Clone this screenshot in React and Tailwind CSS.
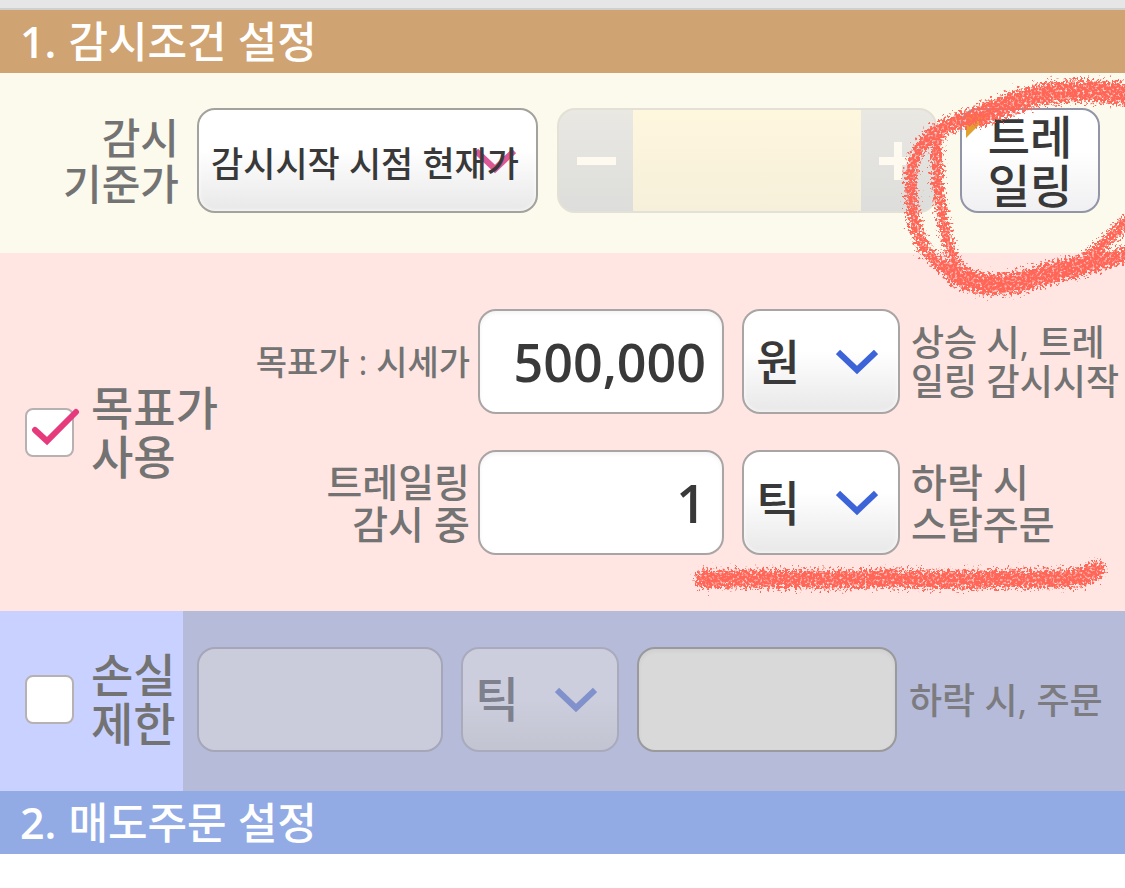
import React, { useState } from 'react';
import clsx from 'clsx';

const Chevron = ({ className }) => (
    <svg viewBox="0 0 42 28" className={className} fill="none" stroke="currentColor" strokeWidth="6" aria-hidden="true">
        <path d="M2 4 L21 22 L40 4" />
    </svg>
);

const SectionTitle = ({ number, children, className }) => (
    <h2 className={clsx('flex h-[63px] items-center gap-3 px-5 text-[43px] leading-[60px] font-medium text-white', className)}>
        <span className="font-semibold">{number}.</span>
        <span>{children}</span>
    </h2>
);

const UnitSelect = ({ label, value, options, disabled }) => (
    <div
        className={clsx(
            'relative h-[105px] w-[158px] shrink-0 rounded-[18px] border-2',
            disabled
                ? 'border-[#a9abbd] bg-linear-to-b from-[#cdcedd] from-50% to-[#c3c4d2] text-[#7e808d]'
                : 'border-[#aaa5a5] bg-linear-to-b from-white from-40% to-[#e8e8e8] text-[#393939] inset-shadow-[0_0_4px_#ffffff]'
        )}
    >
        <Chevron className={clsx('absolute top-[37px] right-5 w-[42px]', disabled ? 'text-[#8091cc]' : 'text-[#3c64d8]')} />
        <select
            aria-label={label}
            defaultValue={value}
            disabled={disabled}
            className="relative h-full w-full appearance-none bg-transparent pl-3 text-[48px] font-medium opacity-100"
        >
            {options.map((o) => (
                <option key={o}>{o}</option>
            ))}
        </select>
    </div>
);

const NumberField = ({ className, ...props }) => (
    <input
        type="text"
        inputMode="numeric"
        className={clsx('h-[105px] shrink-0 rounded-[18px] border-2 px-4 text-right text-[52px] font-semibold', className)}
        {...props}
    />
);

const ToggleLabel = ({ id, checked, onChange, children }) => (
    <div className="flex items-center gap-[17px] pl-[25px]">
        <div className="relative size-[49px] shrink-0">
            <input
                id={id}
                type="checkbox"
                checked={checked}
                onChange={onChange}
                className="block size-full appearance-none rounded-lg border-2 border-[#b8b1b1] bg-white"
            />
            {checked && (
                <svg viewBox="0 0 56 49" className="pointer-events-none absolute top-0 left-0 h-[49px] w-14" fill="none" aria-hidden="true">
                    <path d="M10 22 L22 33 L51 4" stroke="#e63a7c" strokeWidth="6" strokeLinecap="round" />
                </svg>
            )}
        </div>
        <label htmlFor={id} className="text-[46px] leading-[49px] font-medium whitespace-nowrap text-[#737373]">
            {children}
        </label>
    </div>
);

const CrayonFilter = ({ id }) => (
    <filter id={id} x="-10%" y="-200%" width="120%" height="500%">
        <feTurbulence type="fractalNoise" baseFrequency="0.4" numOctaves="2" seed="7" result="noise" />
        <feDisplacementMap in="SourceGraphic" in2="noise" scale="20" xChannelSelector="R" yChannelSelector="G" result="rough" />
        <feColorMatrix in="noise" type="matrix" values="0 0 0 0 0  0 0 0 0 0  0 0 0 0 0  0 0 3 0 -0.45" result="grain" />
        <feComposite in="rough" in2="grain" operator="in" />
        <feGaussianBlur stdDeviation="0.6" />
    </filter>
);

const CircleMark = () => (
    <svg
        viewBox="900 73 225 237"
        className="pointer-events-none absolute top-0 right-0 z-10 h-[237px] w-[225px]"
        fill="none"
        stroke="#ff6659"
        strokeLinecap="round"
        strokeLinejoin="round"
        aria-hidden="true"
    >
        <CrayonFilter id="crayon-circle" />
        <g filter="url(#crayon-circle)">
            <path strokeWidth="22" d="M1135 97 C1110 90 1070 89 1040 95 C1015 100 1000 108 982 115" />
            <path strokeWidth="16" d="M990 112 C965 119 945 124 930 137" />
            <path strokeWidth="12" d="M935 132 C915 147 910 165 911 190 C912 220 917 243 932 257 C942 268 950 272 960 277" />
            <path strokeWidth="11" d="M938 134 C934 160 938 190 942 214 C946 238 950 254 960 272" />
            <path strokeWidth="21" d="M955 274 C975 286 1005 288 1030 279 C1045 274 1060 271 1078 266" />
            <path strokeWidth="15" d="M1060 274 C1090 266 1105 262 1135 251" />
            <path strokeWidth="12" d="M1078 264 C1098 252 1110 238 1135 213" />
        </g>
    </svg>
);

const UnderlineMark = () => (
    <svg
        viewBox="0 0 420 40"
        className="pointer-events-none absolute right-[15px] bottom-[14px] z-10 h-10 w-[420px]"
        fill="none"
        stroke="#ff6659"
        strokeLinecap="round"
        strokeLinejoin="round"
        aria-hidden="true"
    >
        <CrayonFilter id="crayon-line" />
        <path
            filter="url(#crayon-line)"
            strokeWidth="18"
            d="M14 22 C80 20 110 24 170 22 C220 20 250 25 300 22 C340 21 370 23 392 20 L406 13"
        />
    </svg>
);

const App = () => {
    const [useTarget, setUseTarget] = useState(true);
    const [useStopLoss, setUseStopLoss] = useState(false);

    return (
        <main className="min-h-screen overflow-x-hidden bg-white font-['Open_Sans','Noto_Sans_CJK_KR',sans-serif]">
            <div className="h-[10px] border-b-2 border-[#cfcfcf] bg-[#e6e6e6]" />
            <SectionTitle number="1" className="bg-[#cfa372]">감시조건 설정</SectionTitle>

            <div className="relative">
                <section className="flex h-[180px] bg-[#fcfaec] pt-[35px] pr-[25px]">
                    <label
                        htmlFor="base-price"
                        className="flex h-[105px] w-[179px] shrink-0 items-center justify-end text-right text-[42px] leading-[46px] font-medium text-[#737373]"
                    >
                        감시<br />기준가
                    </label>
                    <div className="relative ml-[18px] h-[105px] w-[341px] shrink-0 rounded-[18px] border-2 border-[#a3a29c] bg-linear-to-b from-white from-40% to-[#e8e8e8] inset-shadow-[0_0_4px_#ffffff]">
                        <Chevron className="absolute top-[37px] right-5 w-[42px] text-[#dc5796]" />
                        <select
                            id="base-price"
                            className="relative h-full w-full appearance-none bg-transparent pt-2 pl-3 text-[35px] font-medium text-[#393939]"
                        >
                            <option>감시시작 시점 현재가</option>
                        </select>
                    </div>
                    <div className="ml-[19px] flex h-[105px] min-w-0 flex-1 overflow-hidden rounded-[18px] border-2 border-[#e3e0d5] bg-linear-to-b from-[#e9e8e3] to-[#dddddb]">
                        <button type="button" aria-label="감소" disabled className="flex w-[74px] items-center justify-center">
                            <span className="h-2 w-[39px] bg-[#fffaf0]" />
                        </button>
                        <input
                            type="text"
                            aria-label="기준가"
                            disabled
                            className="min-w-0 flex-1 bg-linear-to-b from-[#fff6de] to-[#f6f0da]"
                        />
                        <button type="button" aria-label="증가" disabled className="flex w-[74px] items-center justify-center">
                            <svg viewBox="0 0 38 38" className="w-[38px]" stroke="#fffaf0" strokeWidth="8" aria-hidden="true">
                                <path d="M19 0 V38 M0 19 H38" />
                            </svg>
                        </button>
                    </div>
                    <button
                        type="button"
                        className="relative ml-[23px] h-[105px] w-[140px] shrink-0 rounded-[18px] border-2 border-[#9294a8] bg-linear-to-b from-white from-40% to-[#f0f0f2] text-[46px] leading-[49px] font-medium text-[#393939]"
                    >
                        <svg viewBox="0 0 24 24" className="absolute top-1 left-1 w-6" aria-hidden="true">
                            <path d="M0 0 H24 L0 24 Z" fill="#e2a02f" />
                        </svg>
                        <span className="relative">트레<br />일링</span>
                    </button>
                </section>

                <section className="relative flex h-[358px] items-center bg-[#ffe6e2]">
                    <ToggleLabel id="use-target" checked={useTarget} onChange={(e) => setUseTarget(e.target.checked)}>
                        목표가<br />사용
                    </ToggleLabel>
                    <div className="flex min-w-0 flex-1 flex-col gap-9">
                        <div className="flex items-center justify-end">
                            <label htmlFor="target-price" className="text-[34px] leading-10 font-medium whitespace-nowrap text-[#737373]">
                                목표가 : 시세가
                            </label>
                            <NumberField id="target-price" defaultValue="500,000" className="mr-[18px] ml-2 w-[246px] border-[#aaa5a5] bg-white text-[#393939] inset-shadow-sm" />
                            <UnitSelect label="목표가 단위" value="원" options={['원', '틱', '%']} />
                            <p className="ml-[11px] w-[214px] shrink-0 text-[36px] leading-[39px] font-medium whitespace-nowrap text-[#737373]">
                                상승 시, 트레<br />일링 감시시작
                            </p>
                        </div>
                        <div className="flex items-center justify-end">
                            <label htmlFor="trailing" className="text-right text-[39px] leading-[42px] font-medium whitespace-nowrap text-[#737373]">
                                트레일링<br />감시 중
                            </label>
                            <NumberField id="trailing" defaultValue="1" className="mr-[18px] ml-2 w-[246px] border-[#aaa5a5] bg-white text-[#393939] inset-shadow-sm" />
                            <UnitSelect label="트레일링 단위" value="틱" options={['원', '틱', '%']} />
                            <p className="ml-[11px] w-[214px] shrink-0 text-[39px] leading-[42px] font-medium whitespace-nowrap text-[#737373]">
                                하락 시<br />스탑주문
                            </p>
                        </div>
                    </div>
                    <UnderlineMark />
                </section>
                <CircleMark />
            </div>

            <section className="flex h-[180px] bg-[#b5bbd9]">
                <div className="flex w-[183px] shrink-0 items-center bg-[#c8d1ff] pb-1">
                    <ToggleLabel id="use-stop-loss" checked={useStopLoss} onChange={(e) => setUseStopLoss(e.target.checked)}>
                        손실<br />제한
                    </ToggleLabel>
                </div>
                <div className="flex flex-1 items-center gap-[18px] pb-1 pl-[14px]">
                    <NumberField aria-label="손실 제한 값" disabled className="w-[246px] border-[#a5a6b7] bg-[#cbccdb]" />
                    <UnitSelect label="손실 제한 단위" value="틱" options={['원', '틱', '%']} disabled />
                    <NumberField aria-label="주문 가격" disabled className="w-[260px] border-[#9a9a9c] bg-[#d9d9d9] inset-shadow-sm" />
                    <p className="-ml-1.5 pt-1 text-[36px] font-medium whitespace-nowrap text-[#7c7c80]">하락 시, 주문</p>
                </div>
            </section>

            <SectionTitle number="2" className="bg-[#92abe5]">매도주문 설정</SectionTitle>
        </main>
    );
};

export default App;
